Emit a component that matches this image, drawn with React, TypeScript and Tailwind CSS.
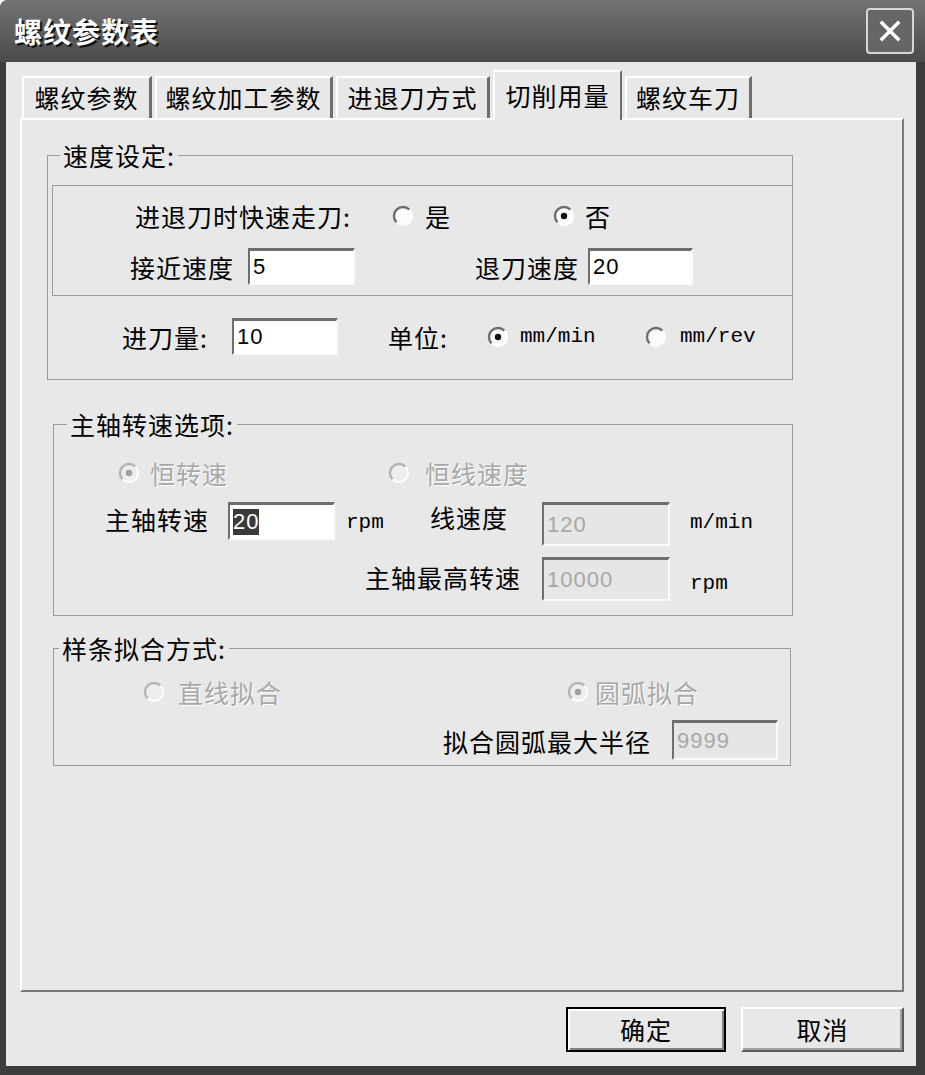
import React from "react";

interface RadioProps {
  checked?: boolean;
  disabled?: boolean;
}

function Radio({ checked, disabled }: RadioProps) {
  return (
    <svg width="22" height="22" viewBox="0 0 22 22" className="shrink-0">
      <circle cx="11" cy="11" r="9" fill={disabled ? "#ededed" : "#fbfbfb"} />
      <path
        d="M4.6 17.4 A9 9 0 0 1 17.4 4.6"
        fill="none"
        stroke={disabled ? "#b4b4b4" : "#6e6e6e"}
        strokeWidth="2.4"
      />
      <path d="M17.4 4.6 A9 9 0 0 1 4.6 17.4" fill="none" stroke="#ffffff" strokeWidth="2" />
      {checked && <circle cx="11" cy="11" r="3.2" fill={disabled ? "#a0a0a0" : "#111111"} />}
    </svg>
  );
}

interface FieldProps {
  value: string;
  className: string;
  disabled?: boolean;
  selected?: boolean;
}

function Field({ value, className, disabled, selected }: FieldProps) {
  return (
    <div
      className={`${className} shrink-0 flex items-center pl-[3px] border-2 border-t-[3px] border-t-[#6e6e6e] border-l-[#6e6e6e] border-r-[#fbfbfb] border-b-[#fbfbfb] font-['Liberation_Sans',sans-serif] text-[22px] ${
        disabled ? "bg-[#e6e6e6] text-[#a8a8a8]" : "bg-white text-black"
      }`}
    >
      {selected ? <span className="bg-[#3a3a3a] text-white leading-[26px]">{value}</span> : value}
    </div>
  );
}

const TABS = [
  { label: "螺纹参数", w: "w-[130px]" },
  { label: "螺纹加工参数", w: "w-[178px]" },
  { label: "进退刀方式", w: "w-[154px]" },
  { label: "切削用量", w: "w-[129px]", active: true },
  { label: "螺纹车刀", w: "w-[127px]" },
];

export default function App() {
  return (
    <div className="w-[925px] h-[1075px] bg-[#3c3c3c] flex flex-col rounded-tl-[8px] overflow-hidden font-['Noto_Sans_CJK_SC',sans-serif] text-black">
      {/* Title bar */}
      <div className="h-[62px] shrink-0 flex items-center justify-between pl-[14px] pr-[11px] bg-linear-to-b from-[#747474] to-[#4a4a4a]">
        <span className="text-[28px] font-bold text-white tracking-[1px] [text-shadow:2px_2px_0_#111]">
          螺纹参数表
        </span>
        <div className="w-[48px] h-[46px] rounded-[4px] border-2 border-[#d6d6d6] bg-[#666] flex items-center justify-center">
          <svg width="26" height="26" viewBox="0 0 26 26">
            <path d="M5 5 L21 21 M21 5 L5 21" stroke="#ffffff" strokeWidth="3.5" strokeLinecap="square" />
          </svg>
        </div>
      </div>

      {/* Client area */}
      <div className="flex-1 flex flex-col ml-[6px] mr-[9px] mb-[9px] bg-[#e8e8e8] pl-[14px] pr-[12px]">
        {/* Tabs */}
        <div className="flex items-end gap-[3px] mt-[8px] pl-[2px] relative z-10 text-[25px] tracking-[1px]">
          {TABS.map((t) =>
            t.active ? (
              <div
                key={t.label}
                className={`${t.w} h-[50px] mb-[-2px] flex items-center justify-center bg-[#e8e8e8] border-t-2 border-l-2 border-r-2 border-t-white border-l-white border-r-[#6e6e6e]`}
              >
                {t.label}
              </div>
            ) : (
              <div
                key={t.label}
                className={`${t.w} h-[42px] flex items-center justify-center bg-[#e8e8e8] border-t-2 border-l-2 border-r-[3px] border-t-white border-l-white border-r-[#6e6e6e]`}
              >
                {t.label}
              </div>
            )
          )}
        </div>

        {/* Tab panel */}
        <div className="flex-1 flex flex-col pt-[20px] border-2 border-t-white border-l-white border-r-[#7a7a7a] border-b-[#7a7a7a] text-[25px] tracking-[1px] leading-[30px]">
          {/* 速度设定 */}
          <fieldset className="ml-[25px] w-[746px] border border-[#9a9a9a]">
            <legend className="ml-[12px] px-[3px] leading-[30px]">速度设定:</legend>
            <div className="mt-[15px] ml-[4px] border-t border-l border-b border-[#9a9a9a] pt-[12px] pb-[10px]">
              <div className="flex items-center h-[36px] pl-[82px]">
                <span className="w-[257px] shrink-0">进退刀时快速走刀:</span>
                <div className="w-[161px] shrink-0 flex items-center">
                  <Radio />
                  <span className="ml-[11px]">是</span>
                </div>
                <div className="flex items-center">
                  <Radio checked />
                  <span className="ml-[10px]">否</span>
                </div>
              </div>
              <div className="flex items-center mt-[14px] pl-[77px]">
                <span className="w-[118px] shrink-0">接近速度</span>
                <Field value="5" className="w-[107px] h-[37px]" />
                <span className="ml-[120px] w-[113px] shrink-0">退刀速度</span>
                <Field value="20" className="w-[105px] h-[37px]" />
              </div>
            </div>
            <div className="flex items-center pt-[22px] pb-[24px] pl-[74px]">
              <span className="w-[110px] shrink-0">进刀量:</span>
              <Field value="10" className="w-[106px] h-[37px]" />
              <span className="ml-[50px] w-[99px] shrink-0">单位:</span>
              <div className="w-[158px] shrink-0 flex items-center">
                <Radio checked />
                <span className="ml-[11px] font-['Liberation_Mono',monospace] text-[21px] tracking-normal">
                  mm/min
                </span>
              </div>
              <div className="flex items-center">
                <Radio />
                <span className="ml-[13px] font-['Liberation_Mono',monospace] text-[21px] tracking-normal">
                  mm/rev
                </span>
              </div>
            </div>
          </fieldset>

          {/* 主轴转速选项 */}
          <fieldset className="mt-[29px] ml-[31px] w-[740px] border border-[#9a9a9a] pb-[14px]">
            <legend className="ml-[13px] px-[3px] leading-[30px]">主轴转速选项:</legend>
            <div className="flex items-center h-[30px] mt-[19px] pl-[64px] text-[#a8a8a8] [text-shadow:1px_1px_0_#fff]">
              <div className="w-[270px] shrink-0 flex items-center">
                <Radio checked disabled />
                <span className="ml-[10px]">恒转速</span>
              </div>
              <div className="flex items-center">
                <Radio disabled />
                <span className="ml-[15px]">恒线速度</span>
              </div>
            </div>
            <div className="flex items-start mt-[14px] pl-[51px]">
              <span className="w-[123px] shrink-0 mt-[2px]">主轴转速</span>
              <Field value="20" selected className="w-[107px] h-[38px]" />
              <span className="ml-[11px] w-[84px] shrink-0 mt-[6px] font-['Liberation_Mono',monospace] text-[21px] tracking-normal">
                rpm
              </span>
              <span className="w-[112px] shrink-0">线速度</span>
              <Field value="120" disabled className="w-[128px] h-[44px]" />
              <span className="ml-[20px] mt-[6px] font-['Liberation_Mono',monospace] text-[21px] tracking-normal">
                m/min
              </span>
            </div>
            <div className="flex items-start mt-[11px] pl-[311px]">
              <span className="w-[177px] shrink-0 mt-[5px]">主轴最高转速</span>
              <Field value="10000" disabled className="w-[128px] h-[44px]" />
              <span className="ml-[20px] mt-[12px] font-['Liberation_Mono',monospace] text-[21px] tracking-normal">
                rpm
              </span>
            </div>
          </fieldset>

          {/* 样条拟合方式 */}
          <fieldset className="mt-[17px] ml-[31px] w-[738px] border border-[#9a9a9a] pb-[5px]">
            <legend className="ml-[5px] px-[3px] leading-[30px]">样条拟合方式:</legend>
            <div className="flex items-center h-[30px] mt-[14px] pl-[89px] text-[#a8a8a8] [text-shadow:1px_1px_0_#fff]">
              <div className="w-[424px] shrink-0 flex items-center">
                <Radio disabled />
                <span className="ml-[13px]">直线拟合</span>
              </div>
              <div className="flex items-center">
                <Radio checked disabled />
                <span className="ml-[6px]">圆弧拟合</span>
              </div>
            </div>
            <div className="flex items-start mt-[13px] pl-[389px]">
              <span className="w-[229px] shrink-0 mt-[6px]">拟合圆弧最大半径</span>
              <Field value="9999" disabled className="w-[106px] h-[40px]" />
            </div>
          </fieldset>
        </div>

        {/* Buttons */}
        <div className="flex justify-end gap-[15px] mt-[15px] mb-[14px] text-[25px] tracking-[1px]">
          <button className="w-[160px] h-[45px] bg-[#e8e8e8] border-2 border-black shadow-[inset_2px_2px_0_#ffffff,inset_-2px_-2px_0_#808080]">
            确定
          </button>
          <button className="w-[163px] h-[45px] bg-[#e8e8e8] border-2 border-t-white border-l-white border-r-[#5a5a5a] border-b-[#5a5a5a] shadow-[inset_-2px_-2px_0_#a0a0a0]">
            取消
          </button>
        </div>
      </div>
    </div>
  );
}
